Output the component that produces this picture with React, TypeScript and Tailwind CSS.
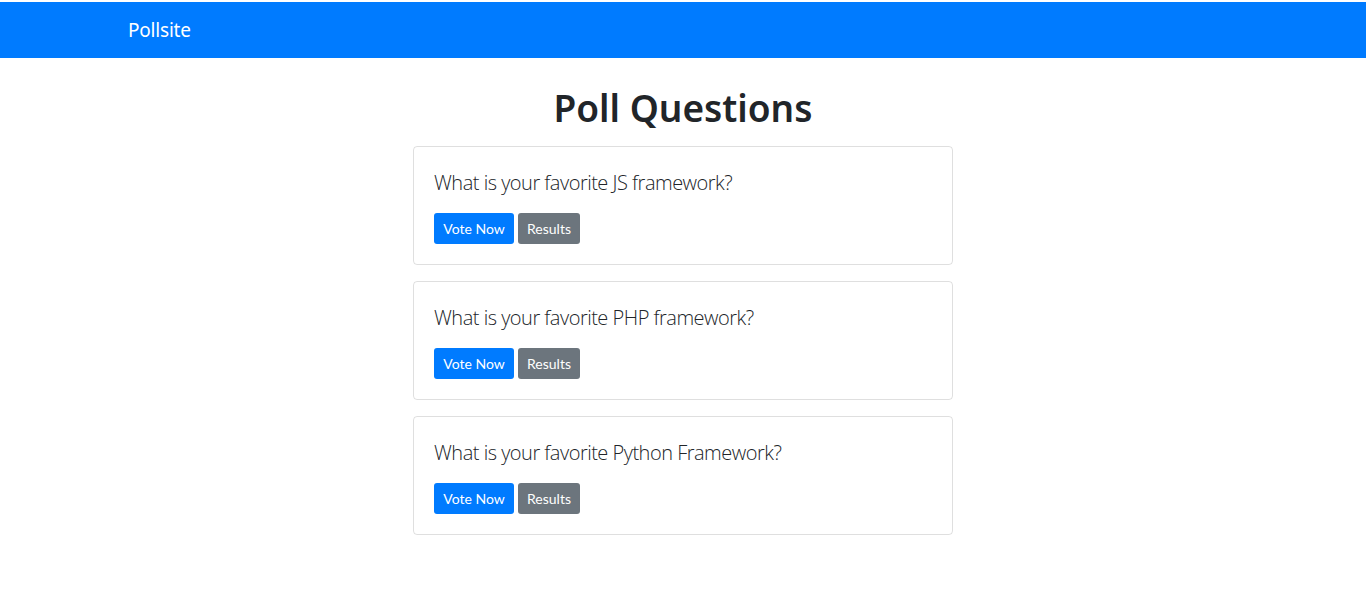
import React from 'react';

const questions = [
  'What is your favorite JS framework?',
  'What is your favorite PHP framework?',
  'What is your favorite Python Framework?',
];

export default function App() {
  return (
    <div className="min-h-[596px] bg-white text-[#212529] font-['Noto_Sans',sans-serif]">
      {/* Navbar */}
      <div className="pt-[2px]">
        <nav className="h-[56px] bg-[#007bff] flex items-center">
          <div className="w-[1140px] mx-auto px-[15px]">
            <a className="text-white text-[19px] leading-[30px] tracking-[-0.2px]">Pollsite</a>
          </div>
        </nav>
      </div>

      <div className="w-[540px] mx-auto">
        <h1 className="mt-[26px] mb-[14px] text-center text-[37px] leading-[48px] font-semibold">
          Poll Questions
        </h1>

        {questions.map((q) => (
          <div
            key={q}
            className="mb-[16px] border border-[rgba(0,0,0,0.125)] rounded-[4px] px-[20px] pt-[20px] pb-[20px]"
          >
            <p className="mt-[4px] mb-[18px] text-[20px] leading-[24px] font-light tracking-[-0.5px] text-[#212529] font-['Open_Sans',sans-serif]">
              {q}
            </p>
            <div className="flex gap-[4px] font-['Lato',sans-serif]">
              <button className="h-[31px] w-[80px] rounded-[3px] bg-[#007bff] text-white text-[14px]">
                Vote Now
              </button>
              <button className="h-[31px] w-[62px] rounded-[3px] bg-[#6c757d] text-white text-[14px]">
                Results
              </button>
            </div>
          </div>
        ))}
      </div>
    </div>
  );
}
